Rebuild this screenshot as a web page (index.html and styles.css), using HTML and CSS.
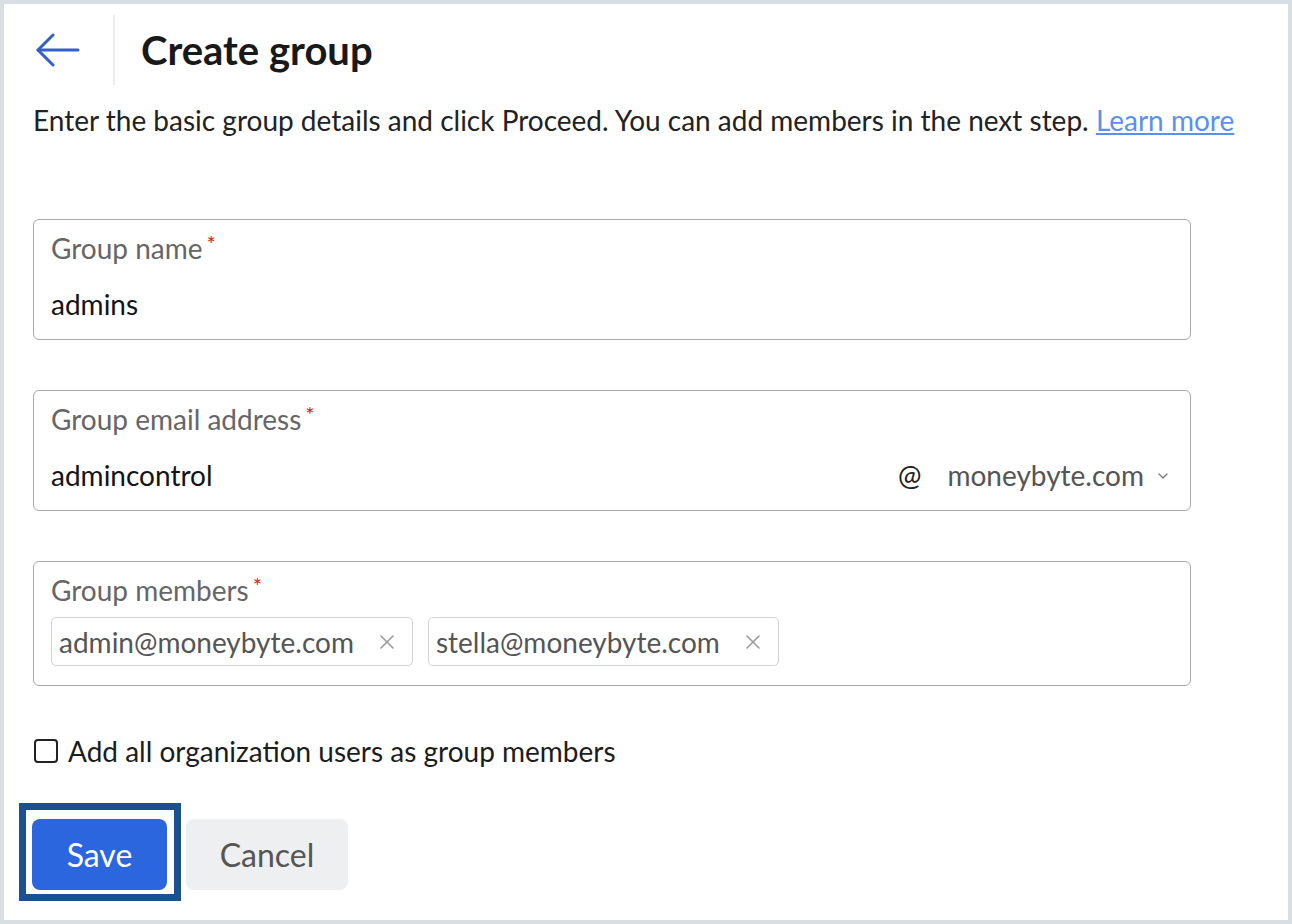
FILE: index.html
```html
<!DOCTYPE html>
<html lang="en">
<head>
  <meta charset="UTF-8">
  <meta name="viewport" content="width=device-width, initial-scale=1">
  <title>Create group</title>
  <link rel="stylesheet" href="styles.css">
</head>
<body>
  <div class="panel">
    <div class="head">
      <button class="back" type="button" aria-label="Back">
        <svg width="44" height="36" viewBox="0 0 44 36" fill="none" stroke="#3361c6" stroke-width="3" stroke-linecap="round" stroke-linejoin="round">
          <path d="M2 18 H42"/>
          <path d="M17 3 L2 18 L17 33"/>
        </svg>
      </button>
      <span class="divider"></span>
      <h1>Create group</h1>
    </div>

    <p class="intro">Enter the basic group details and click Proceed. You can add members in the next step. <a href="#">Learn more</a></p>

    <form class="fields">
      <div class="field">
        <label>Group name<span class="req">*</span></label>
        <div class="value">admins</div>
      </div>

      <div class="field">
        <label>Group email address<span class="req">*</span></label>
        <div class="value email-row">
          <span>admincontrol</span>
          <span class="domain">
            <span class="at">@</span>
            <span class="domain-name">moneybyte.com</span>
            <svg class="chev" width="10" height="6" viewBox="0 0 10 6" fill="none" stroke="#777" stroke-width="1.3" stroke-linecap="round" stroke-linejoin="round"><path d="M1 1 L5 5 L9 1"/></svg>
          </span>
        </div>
      </div>

      <div class="field">
        <label>Group members<span class="req">*</span></label>
        <div class="chips">
          <span class="chip">admin@moneybyte.com
            <svg class="x" width="16" height="16" viewBox="0 0 16 16" stroke="#9a9a9a" stroke-width="1.6" stroke-linecap="round"><path d="M2 2 L14 14 M14 2 L2 14"/></svg>
          </span>
          <span class="chip">stella@moneybyte.com
            <svg class="x" width="16" height="16" viewBox="0 0 16 16" stroke="#9a9a9a" stroke-width="1.6" stroke-linecap="round"><path d="M2 2 L14 14 M14 2 L2 14"/></svg>
          </span>
        </div>
      </div>

      <label class="check">
        <span class="box"></span>
        Add all organization users as group members
      </label>

      <div class="actions">
        <div class="focus-ring">
          <button class="btn save" type="button">Save</button>
        </div>
        <button class="btn cancel" type="button">Cancel</button>
      </div>
    </form>
  </div>
</body>
</html>
```

FILE: styles.css
```css
html, body { margin: 0; height: 100%; }
body { background-color: #d8dfe4; font-family: Lato, "Open Sans", sans-serif; color: #1c1c1c; }
.panel { margin: 4px; height: 916px; box-sizing: border-box; background-color: #fff; padding: 11px 29px 0; }

.head { display: flex; align-items: center; height: 70px; }
.back { background: none; border: none; padding: 0; margin-left: 3px; display: flex; cursor: pointer; }
.divider { width: 2px; align-self: stretch; background-color: #ececec; margin-left: 33px; }
.head h1 { margin: 0 0 0 26px; font-size: 40px; line-height: 48px; font-weight: 700; color: #191919; }

.intro { margin: 20px 0 0; font-size: 28px; line-height: 30px; color: #222; }
.intro a { color: #5b8ff0; }

.fields { margin-top: 84px; }
.field { width: 1158px; box-sizing: border-box; border: 1.5px solid #a8a8a8; border-radius: 6px;
  padding: 12px 17px 19px; margin-bottom: 50px; }
.field label { display: block; font-size: 28px; line-height: 32px; color: #666; }
.req { position: relative; top: -7px; line-height: 0; color: #d51c1c; font-size: 22px; margin-left: 4px; }
.value { margin-top: 24px; font-size: 28px; line-height: 32px; color: #141414; }
.email-row { display: flex; justify-content: space-between; }
.domain { display: flex; align-items: center; margin-right: 5px; }
.at { color: #222; margin-right: 26px; }
.domain-name { color: #555; }
.chev { margin-left: 14px; margin-top: 2px; }

.chips { display: flex; gap: 15px; margin-top: 11px; margin-bottom: 0; }
.chip { display: flex; align-items: center; height: 49px; box-sizing: border-box; border: 1.5px solid #d3d3d3;
  border-radius: 5px; padding: 0 17px 0 7px; font-size: 28px; color: #555; }
.chip .x { margin-left: 25px; }

.check { display: flex; align-items: center; font-size: 28px; line-height: 30px; color: #1c1c1c; margin-top: 1px; }
.check .box { width: 20px; height: 20px; border: 2px solid #222; border-radius: 4px; margin: 0 10px 0 1px; }

.actions { display: flex; align-items: flex-start; margin-top: 37px; }
.focus-ring { border: 7px solid #1c5191; padding: 9px 7px 4px 6px; margin-left: -14px; display: flex; }
.btn { font-family: Lato, "Open Sans", sans-serif; font-size: 32px; border: none; border-radius: 8px; height: 71px; cursor: pointer; }
.save { width: 135px; background-color: #2b66de; color: #fff; }
.cancel { width: 162px; margin: 16px 0 0 5px; background-color: #eeeff1; color: #555; }
```
